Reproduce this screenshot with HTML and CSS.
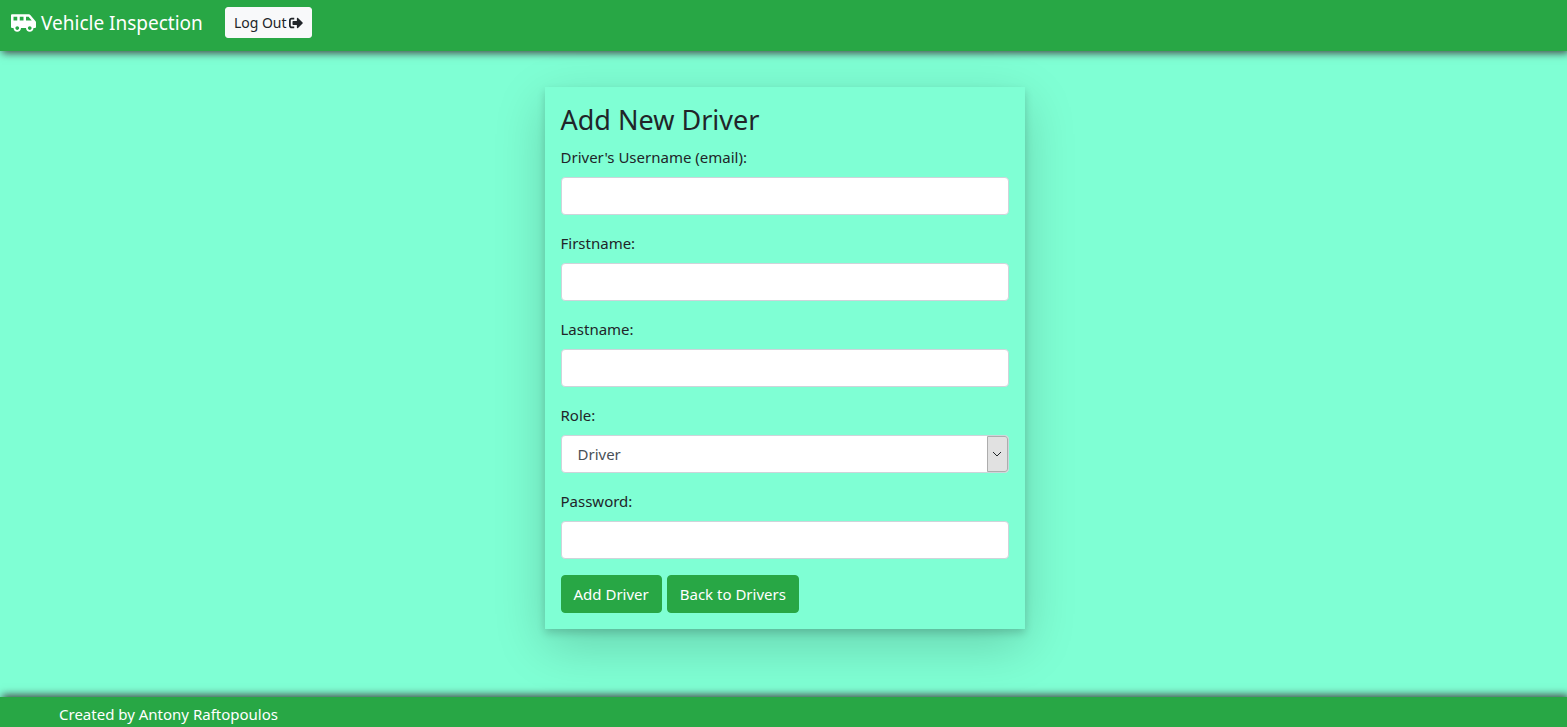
FILE: index.html
```html
<!DOCTYPE html>
<html lang="en">
<head>
<meta charset="utf-8">
<meta name="viewport" content="width=device-width, initial-scale=1">
<title>Vehicle Inspection</title>
<link rel="stylesheet" href="styles.css">
</head>
<body>
<header class="navbar">
  <a class="brand" href="#">
    <svg class="brand-icon" viewBox="0 0 640 512" aria-hidden="true"><path fill="currentColor" d="M628.88 210.65L494.39 49.27A48.01 48.01 0 0 0 457.52 32H32C14.33 32 0 46.33 0 64v288c0 17.67 14.33 32 32 32h32c0 53.02 42.98 96 96 96s96-42.98 96-96h128c0 53.02 42.98 96 96 96s96-42.98 96-96h32c17.67 0 32-14.33 32-32V241.38c0-11.23-3.94-22.1-11.12-30.73zM64 192V96h96v96H64zm96 240c-26.51 0-48-21.49-48-48s21.49-48 48-48 48 21.49 48 48-21.49 48-48 48zm160-240h-96V96h96v96zm160 240c-26.51 0-48-21.49-48-48s21.49-48 48-48 48 21.49 48 48-21.49 48-48 48zm-96-240V96h66.02l80 96H384z"/></svg>
    <span>Vehicle Inspection</span>
  </a>
  <button class="btn-logout" type="button">
    <span>Log Out</span>
    <svg class="logout-icon" viewBox="0 0 512 512" aria-hidden="true"><path fill="currentColor" d="M497 273L329 441c-15 15-41 4.5-41-17v-96H152c-13.3 0-24-10.7-24-24v-96c0-13.3 10.7-24 24-24h136V88c0-21.4 25.9-32 41-17l168 168c9.3 9.4 9.3 24.6 0 34zM192 436v-40c0-6.6-5.4-12-12-12H96c-17.7 0-32-14.3-32-32V160c0-17.7 14.3-32 32-32h84c6.6 0 12-5.4 12-12V76c0-6.6-5.4-12-12-12H96c-53 0-96 43-96 96v192c0 53 43 96 96 96h84c6.6 0 12-5.4 12-12z"/></svg>
  </button>
</header>
<main class="content">
  <form class="card">
    <h1 class="title">Add New Driver</h1>
    <div class="field">
      <label for="username">Driver's Username (email):</label>
      <input class="control" id="username" type="email">
    </div>
    <div class="field">
      <label for="firstname">Firstname:</label>
      <input class="control" id="firstname" type="text">
    </div>
    <div class="field">
      <label for="lastname">Lastname:</label>
      <input class="control" id="lastname" type="text">
    </div>
    <div class="field">
      <label for="role">Role:</label>
      <div class="select-wrap">
        <select class="control" id="role"><option>Driver</option></select>
        <span class="select-arrow"><svg class="chevron" viewBox="0 0 10 6" aria-hidden="true"><path d="M1 1l4 4 4-4" fill="none" stroke="currentColor"/></svg></span>
      </div>
    </div>
    <div class="field">
      <label for="password">Password:</label>
      <input class="control" id="password" type="password">
    </div>
    <div class="actions">
      <button class="btn" type="submit">Add Driver</button>
      <a class="btn" href="#">Back to Drivers</a>
    </div>
  </form>
</main>
<footer class="footer">Created by Antony Raftopoulos</footer>
</body>
</html>
```
FILE: styles.css
```css
* {
  box-sizing: border-box;
}

body {
  display: flex;
  flex-direction: column;
  min-height: 100vh;
  margin: 0;
  background: #7fffd4;
  color: #212529;
  font-family: "Segoe UI", "Noto Sans", sans-serif;
  font-size: 15px;
  line-height: 24px;
}

.navbar {
  display: flex;
  align-items: center;
  gap: 22px;
  padding: 7px 11px 13px;
  background: #28a745;
  box-shadow: 2px 2px 8px #444;
}

.brand {
  display: flex;
  align-items: center;
  gap: 5px;
  color: #fff;
  font-size: 19px;
  text-decoration: none;
}

.brand-icon {
  width: 25px;
  height: 20px;
}

.btn-logout {
  display: flex;
  align-items: center;
  gap: 2px;
  padding: 4px 8px;
  border: 1px solid #f8f9fa;
  border-radius: 3px;
  background: #f8f9fa;
  color: #212529;
  font-family: inherit;
  font-size: 14px;
  line-height: 21px;
}

.logout-icon {
  width: 14px;
  height: 14px;
}

.content {
  flex: 1;
  padding: 36px 16px 64px 18px;
}

.card {
  max-width: 480px;
  margin: 0 auto;
  padding: 16px;
  box-shadow: 0 4px 8px rgba(0, 0, 0, 0.16), 0 16px 48px rgba(0, 0, 0, 0.18);
}

.title {
  margin: 0 0 8px;
  font-size: 27px;
  font-weight: 400;
  line-height: 34px;
}

.field {
  display: flex;
  flex-direction: column;
  gap: 8px;
  margin-bottom: 16px;
}

.control {
  width: 100%;
  height: 38px;
  padding: 6px 12px;
  border: 1px solid #ced4da;
  border-radius: 4px;
  background: #fff;
  color: #495057;
  font: inherit;
}

.select-wrap {
  position: relative;
}

select.control {
  display: block;
  padding-left: 16px;
  appearance: none;
}

.select-arrow {
  position: absolute;
  inset: 1px 1px 1px auto;
  display: flex;
  align-items: center;
  justify-content: center;
  width: 21px;
  border: 1px solid #adadad;
  border-radius: 0 3px 3px 0;
  background: #e1e1e1;
  pointer-events: none;
}

.chevron {
  width: 10px;
  height: 6px;
}

.actions {
  display: flex;
  gap: 5px;
}

.btn {
  padding: 6px 12px;
  border: 1px solid #28a745;
  border-radius: 4px;
  background: #28a745;
  color: #fff;
  font: inherit;
  text-decoration: none;
}

.footer {
  padding: 5px 59px 1px;
  background: #28a745;
  color: #fff;
  box-shadow: 2px -2px 8px #444;
}
```
